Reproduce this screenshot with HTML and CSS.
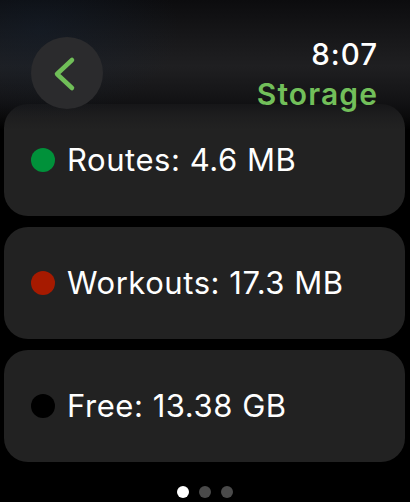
FILE: index.html
```html
<!DOCTYPE html>
<html lang="en">
<head>
<meta charset="utf-8">
<title>Storage</title>
<link rel="stylesheet" href="styles.css">
</head>
<body>
<div class="screen">
  <header class="header">
    <div class="back">
      <svg class="chevron" width="72" height="72" viewBox="0 0 72 72">
        <path d="M41 23 L26 37 L41 51" fill="none" stroke="#70be58" stroke-width="4.5" stroke-linecap="round" stroke-linejoin="round"/>
      </svg>
    </div>
    <div class="titles">
      <div class="time">8:07</div>
      <div class="title">Storage</div>
    </div>
  </header>
  <main class="list">
    <div class="card"><span class="dot dot-green"></span><span class="label">Routes: 4.6 MB</span></div>
    <div class="card"><span class="dot dot-red"></span><span class="label">Workouts: 17.3 MB</span></div>
    <div class="card"><span class="dot dot-black"></span><span class="label">Free: 13.38 GB</span></div>
  </main>
  <div class="pager">
    <span class="pdot pdot-active"></span>
    <span class="pdot"></span>
    <span class="pdot"></span>
  </div>
</div>
</body>
</html>
```
FILE: styles.css
```css
* { box-sizing: border-box; }
html, body { margin: 0; padding: 0; background: #000; }
body { font-family: Inter, "Noto Sans", sans-serif; color: #fff; }

.screen {
  position: relative;
  width: 410px;
  height: 502px;
  overflow: hidden;
  background: #000;
}

.header {
  position: absolute;
  top: 0;
  left: 0;
  right: 0;
  height: 130px;
  z-index: 2;
  display: flex;
  justify-content: space-between;
  align-items: flex-start;
  padding: 37px 33px 0 31px;
  background:
    radial-gradient(ellipse 140px 90px at 40px 30px, rgba(20,34,52,0.4), rgba(20,34,52,0) 100%),
    linear-gradient(to bottom,
      rgba(12,12,14,1) 0px,
      rgba(24,24,26,1) 40px,
      rgba(31,31,33,1) 66px,
      rgba(22,22,24,1) 92px,
      rgba(20,20,22,0.85) 104px,
      rgba(24,24,26,0.45) 116px,
      rgba(24,24,26,0) 130px);
}

.back {
  width: 72px;
  height: 72px;
  border-radius: 50%;
  background: #2b2b2d;
}
.chevron { display: block; }

.titles {
  text-align: right;
  padding-top: 1px;
}
.time {
  font-size: 29.5px;
  line-height: 33px;
  font-weight: 500;
  color: #fff;
  letter-spacing: 1px;
  margin-right: -1px;
}
.title {
  margin-top: 6px;
  font-size: 30px;
  line-height: 34px;
  font-weight: 600;
  color: #72bf5a;
  letter-spacing: 1.1px;
  margin-right: -1px;
}

.list {
  display: flex;
  flex-direction: column;
  gap: 11px;
  padding: 104px 5px 0 4px;
}

.card {
  height: 112px;
  border-radius: 24px;
  background: #222222;
  display: flex;
  align-items: center;
  gap: 12px;
  padding-left: 27px;
}

.dot {
  width: 24px;
  height: 24px;
  border-radius: 50%;
  flex: none;
}
.dot-green { background: #00913a; }
.dot-red { background: #a61a00; }
.dot-black { background: #000; }

.label {
  font-size: 31px;
  line-height: 36px;
  font-weight: 400;
  letter-spacing: 0.55px;
  color: #fff;
}

.pager {
  display: flex;
  justify-content: center;
  gap: 10px;
  margin-top: 24px;
}
.pdot {
  width: 12px;
  height: 12px;
  border-radius: 50%;
  background: #4a4a4a;
}
.pdot-active { background: #fff; }
```
